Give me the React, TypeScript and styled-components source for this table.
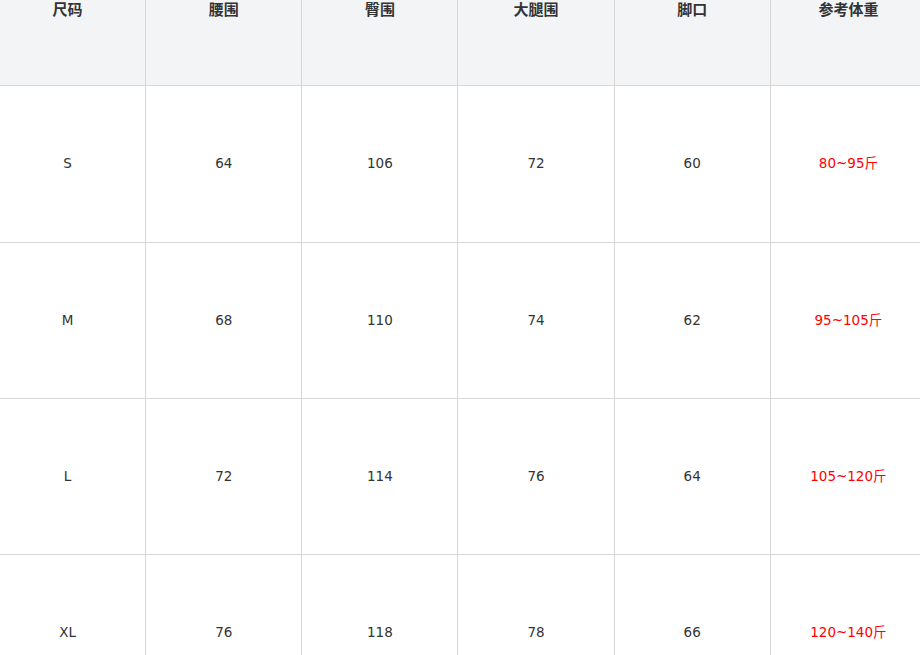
import React from 'react';
import styled, { createGlobalStyle } from 'styled-components';

const GlobalStyle = createGlobalStyle`
  html, body {
    margin: 0;
    padding: 0;
    background: #ffffff;
    overflow: hidden;
  }
  body {
    font-family: "DejaVu Sans", "Noto Sans CJK SC", sans-serif;
  }
`;

const Viewport = styled.div`
  width: 920px;
  height: 655px;
  overflow: hidden;
`;

const Table = styled.table`
  width: 938px;
  margin-left: -11px;
  margin-top: -1px;
  border-collapse: collapse;
  table-layout: fixed;
  color: #333333;
  font-size: 14px;
`;

const HeadCell = styled.th`
  height: 85.3px;
  padding: 0;
  vertical-align: top;
  text-align: center;
  background: #f3f4f6;
  border: 1px solid #d6d6d6;
  font-family: "Noto Sans CJK SC", sans-serif;
  font-size: 15px;
  font-weight: 700;
  line-height: 17px;
  color: #333333;
`;

const Cell = styled.td<{ $accent?: boolean }>`
  height: 155.3px;
  padding: 0;
  vertical-align: middle;
  text-align: center;
  border: 1px solid #d6d6d6;
  color: ${(p) => (p.$accent ? '#ff0000' : '#333333')};
  font-size: 13.5px;
  line-height: 17px;
`;

const headers = ['尺码', '腰围', '臀围', '大腿围', '脚口', '参考体重'];

const rows = [
  ['S', '64', '106', '72', '60', '80~95斤'],
  ['M', '68', '110', '74', '62', '95~105斤'],
  ['L', '72', '114', '76', '64', '105~120斤'],
  ['XL', '76', '118', '78', '66', '120~140斤'],
];

const App: React.FC = () => {
  return (
    <Viewport>
      <GlobalStyle />
      <Table>
        <thead>
          <tr>
            {headers.map((h) => (
              <HeadCell key={h}>{h}</HeadCell>
            ))}
          </tr>
        </thead>
        <tbody>
          {rows.map((row) => (
            <tr key={row[0]}>
              {row.map((value, i) => (
                <Cell key={i} $accent={i === row.length - 1}>
                  {value}
                </Cell>
              ))}
            </tr>
          ))}
        </tbody>
      </Table>
    </Viewport>
  );
};

export default App;
